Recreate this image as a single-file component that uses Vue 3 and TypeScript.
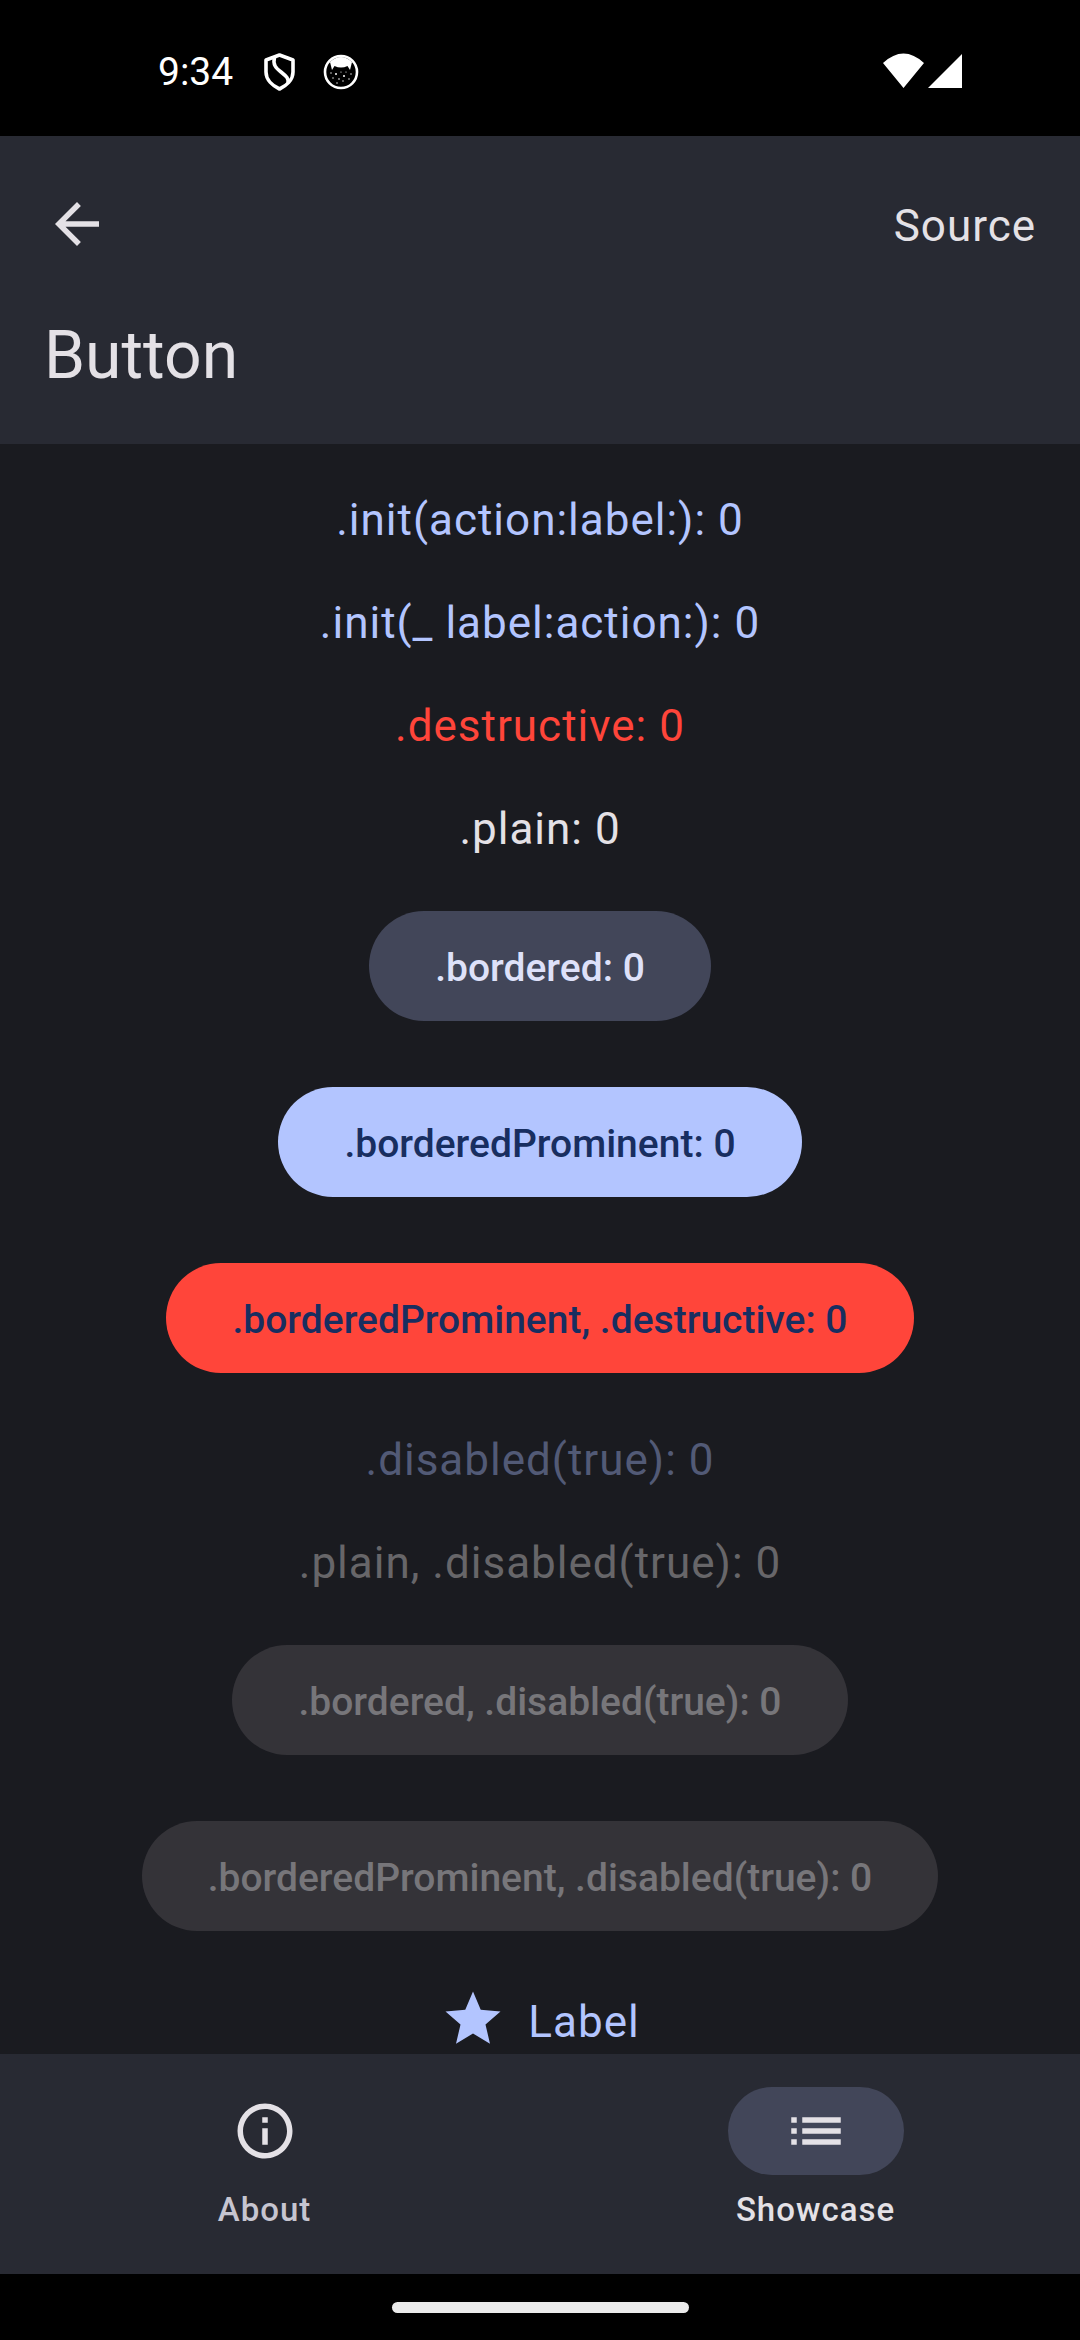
<script setup lang="ts">
import { reactive, ref } from 'vue'

type Kind = 'text' | 'pill'

interface Sample {
  name: string
  kind: Kind
  tone: string
  disabled?: boolean
  count: number
}

const samples = reactive<Sample[]>([
  { name: '.init(action:label:)', kind: 'text', tone: 'accent', count: 0 },
  { name: '.init(_ label:action:)', kind: 'text', tone: 'accent', count: 0 },
  { name: '.destructive', kind: 'text', tone: 'danger', count: 0 },
  { name: '.plain', kind: 'text', tone: 'plain', count: 0 },
  { name: '.bordered', kind: 'pill', tone: 'tonal', count: 0 },
  { name: '.borderedProminent', kind: 'pill', tone: 'filled', count: 0 },
  { name: '.borderedProminent, .destructive', kind: 'pill', tone: 'filled-danger', count: 0 },
  { name: '.disabled(true)', kind: 'text', tone: 'accent', disabled: true, count: 0 },
  { name: '.plain, .disabled(true)', kind: 'text', tone: 'plain', disabled: true, count: 0 },
  { name: '.bordered, .disabled(true)', kind: 'pill', tone: 'tonal', disabled: true, count: 0 },
  { name: '.borderedProminent, .disabled(true)', kind: 'pill', tone: 'filled', disabled: true, count: 0 },
])

const tab = ref<'about' | 'showcase'>('showcase')
</script>

<template>
  <div class="screen">
    <div class="status">
      <div class="status-side">
        <span class="clock">9:34</span>
        <svg class="shield" viewBox="0 0 31 38" aria-hidden="true">
          <path d="M15.500 2 L29 7 V19 C29 27 22 33 15.500 36 C9 33 2 27 2 19 V7 Z" fill="none" stroke="#fff" stroke-width="3.600" stroke-linejoin="round" />
          <path d="M10.500 4 C8.500 12 12 15 17 19 C22 23 25 25 24 30" fill="none" stroke="#fff" stroke-width="3.600" />
        </svg>
        <svg class="cat" viewBox="0 0 36 36" aria-hidden="true">
          <circle cx="18" cy="18" r="16" fill="none" stroke="#fff" stroke-width="2.600" />
          <path d="M7 8 Q18 -2 29 8 L27 16 L24.500 12 Q18 15 11.500 12 L9 16 Z" fill="#fff" />
          <g fill="#fff">
            <circle cx="13" cy="20" r="1" /><circle cx="21" cy="22" r="1" /><circle cx="8" cy="19" r="0.700" />
            <circle cx="28" cy="20" r="0.700" /><circle cx="18" cy="18" r="0.600" /><circle cx="10" cy="24" r="0.700" />
            <circle cx="16" cy="25" r="0.800" /><circle cx="20" cy="27" r="0.700" /><circle cx="26" cy="25" r="0.700" />
            <circle cx="14" cy="29" r="0.700" /><circle cx="23" cy="18" r="0.600" />
          </g>
        </svg>
      </div>
      <svg class="signals" viewBox="0 0 80 36" aria-hidden="true">
        <path d="M1 10 Q21.500 -9 42 10 L21.500 35 Z M80 1 V35 H46 Z" fill="#fff" />
      </svg>
    </div>

    <header class="top">
      <div class="top-row">
        <button class="icon-button" type="button" aria-label="Back">
          <svg class="icon" viewBox="0 0 24 24" aria-hidden="true">
            <path d="M20 11H7.830l5.590-5.590L12 4l-8 8 8 8 1.410-1.410L7.830 13H20z" fill="currentColor" />
          </svg>
        </button>
        <a class="source plain" href="#source">Source</a>
      </div>
      <h1>Button</h1>
    </header>

    <main class="list">
      <div v-for="s in samples" :key="s.name" :class="s.kind + '-row'">
        <button type="button" :class="[s.kind === 'text' ? 'body' : 'pill', s.tone]" :disabled="s.disabled" @click="s.count++">{{ s.name }}: {{ s.count }}</button>
      </div>
      <button type="button" class="label-button accent">
        <svg class="icon" viewBox="0 0 24 24" aria-hidden="true">
          <path d="M12 17.270L18.180 21l-1.640-7.030L22 9.240l-7.190-.610L12 2 9.190 8.630 2 9.240l5.460 4.730L5.820 21z" fill="currentColor" />
        </svg>
        <span class="body">Label</span>
      </button>
    </main>

    <nav class="tabs">
      <button type="button" class="tab" :class="{ active: tab === 'about' }" @click="tab = 'about'">
        <span class="indicator">
          <svg class="icon" viewBox="0 0 24 24" aria-hidden="true">
            <path d="M11 7h2v2h-2zm0 4h2v6h-2zm1-9C6.480 2 2 6.480 2 12s4.480 10 10 10 10-4.480 10-10S17.520 2 12 2zm0 18c-4.410 0-8-3.590-8-8s3.590-8 8-8 8 3.590 8 8-3.590 8-8 8z" fill="currentColor" />
          </svg>
        </span>
        <span class="tab-label">About</span>
      </button>
      <button type="button" class="tab" :class="{ active: tab === 'showcase' }" @click="tab = 'showcase'">
        <span class="indicator">
          <svg class="icon" viewBox="0 0 24 24" aria-hidden="true">
            <path d="M3 7h2v2H3zM3 11h2v2H3zM3 15h2v2H3zM7 7h14v2H7zM7 11h14v2H7zM7 15h14v2H7z" fill="currentColor" />
          </svg>
        </span>
        <span class="tab-label">Showcase</span>
      </button>
    </nav>

    <div class="gesture"><span class="handle"></span></div>
  </div>
</template>

<style>
body {
  margin: 0;
  background: #000;
}
</style>

<style scoped>
.screen {
  display: flex;
  flex-direction: column;
  height: 100vh;
  background: #1a1b20;
  color: #e4e1e6;
  font-family: Roboto, "Noto Sans", sans-serif;
}

button {
  margin: 0;
  padding: 0;
  border: 0;
  background: none;
  color: inherit;
  font: inherit;
  white-space: nowrap;
}

a {
  color: inherit;
  text-decoration: none;
}

.icon {
  display: block;
  width: 66px;
  height: 66px;
}

.status {
  display: flex;
  flex: none;
  align-items: center;
  justify-content: space-between;
  height: 136px;
  padding: 0 118px 0 158px;
  box-sizing: border-box;
  background: #000;
  color: #fff;
}

.status-side {
  display: flex;
  align-items: center;
  padding-top: 8px;
}

.clock {
  font-size: 39px;
  line-height: 44px;
}

.shield {
  width: 31px;
  height: 38px;
  margin-left: 31px;
}

.cat {
  width: 36px;
  height: 36px;
  margin-left: 28px;
}

.signals {
  width: 80px;
  height: 36px;
  padding-top: 6px;
}

.top {
  flex: none;
  padding: 0 44px 44px;
  background: #282a33;
}

.top-row {
  display: flex;
  align-items: center;
  justify-content: space-between;
  height: 176px;
}

h1 {
  margin: 0;
  font-size: 66px;
  font-weight: 400;
  line-height: 88px;
}

.source,
.body {
  display: block;
  padding-top: 5px;
  font-size: 44px;
  line-height: 54px;
  letter-spacing: 1px;
}

.source {
  padding-top: 4px;
}

.list {
  display: flex;
  flex: 1;
  flex-direction: column;
  align-items: center;
  gap: 44px;
  min-height: 0;
  padding-top: 44px;
  overflow: hidden auto;
  scrollbar-width: none;
}

.list > * {
  flex: none;
}

.pill-row {
  padding: 11px 0;
}

.pill {
  display: block;
  height: 110px;
  padding: 4px 66px 0;
  border-radius: 55px;
  font-size: 39px;
  font-weight: 500;
  line-height: 55px;
}

.accent {
  color: #b3c5ff;
}

.danger {
  color: #ff453a;
}

.plain {
  color: #e4e1e6;
}

.accent:disabled {
  color: #525a76;
}

.plain:disabled {
  color: #676669;
}

.tonal {
  background: #424659;
  color: #dee1f9;
}

.filled {
  background: #b3c5ff;
  color: #182e60;
}

.filled-danger {
  background: #ff453a;
  color: #182e60;
}

.pill:disabled {
  background: #343338;
  color: #77767a;
}

.label-button {
  display: flex;
  align-items: center;
  gap: 22px;
}

.tabs {
  display: flex;
  flex: none;
  gap: 22px;
  height: 220px;
  background: #282a33;
}

.tab {
  display: flex;
  flex: 1;
  flex-direction: column;
  align-items: center;
  gap: 13px;
  padding-top: 33px;
  color: #e4e1e6;
}

.indicator {
  display: flex;
  align-items: center;
  justify-content: center;
  width: 176px;
  height: 88px;
  border-radius: 44px;
}

.active .indicator {
  background: #424659;
}

.tab-label {
  color: #c6c5d0;
  font-size: 33px;
  font-weight: 500;
  line-height: 44px;
  letter-spacing: 1px;
}

.active .tab-label {
  color: #e4e1e6;
}

.gesture {
  display: flex;
  flex: none;
  align-items: center;
  justify-content: center;
  height: 66px;
  background: #000;
}

.handle {
  width: 297px;
  height: 11px;
  border-radius: 6px;
  background: #ebebeb;
}
</style>
